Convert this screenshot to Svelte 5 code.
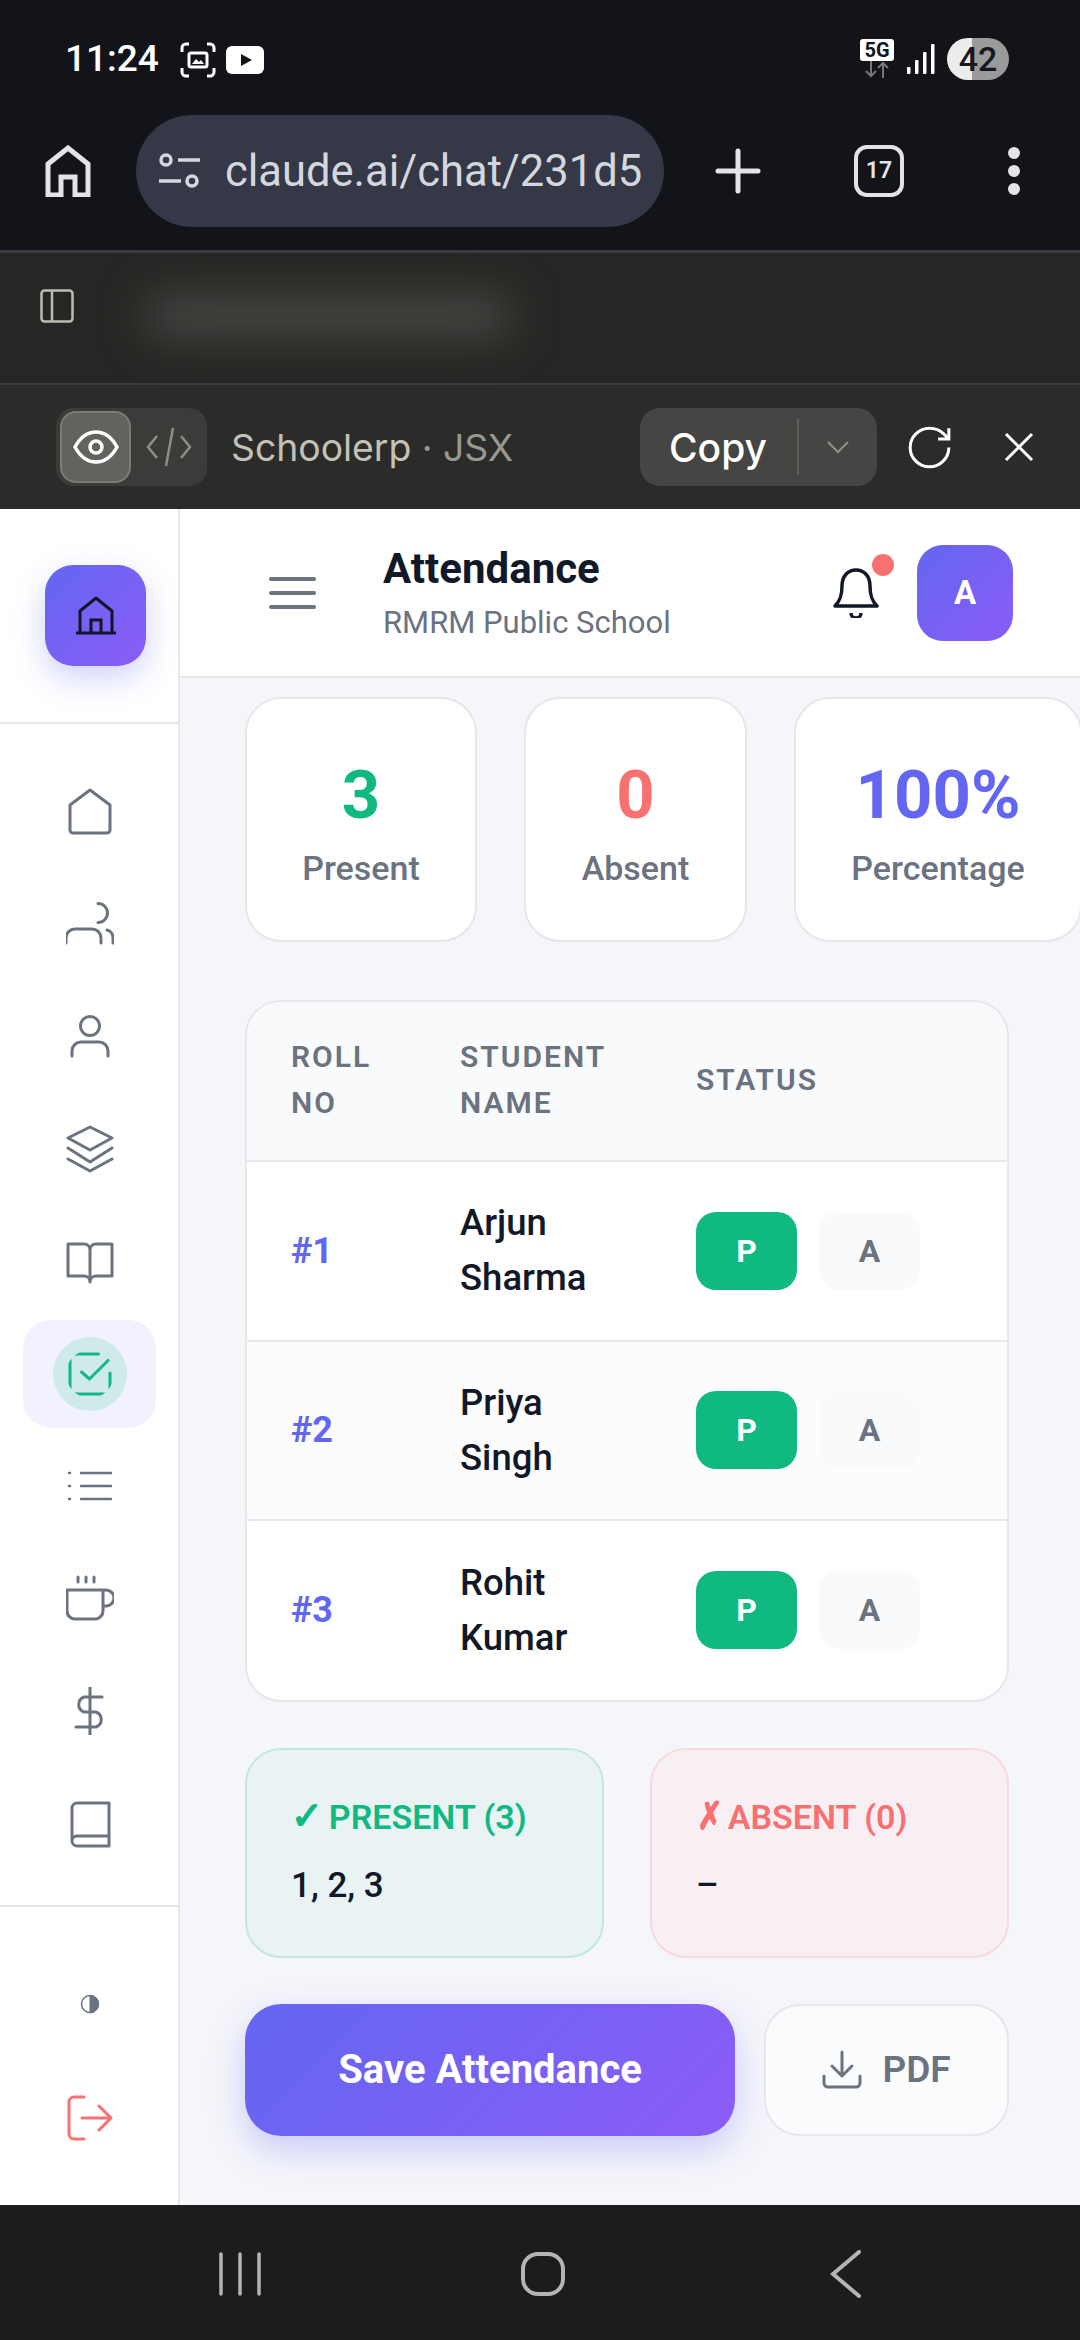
<script>
  const students = [
    { roll: 1, first: "Arjun", last: "Sharma" },
    { roll: 2, first: "Priya", last: "Singh" },
    { roll: 3, first: "Rohit", last: "Kumar" },
  ];

  const nav = [
    { d: "M24 2 L44 17 V42 a3 3 0 0 1-3 3 H7 a3 3 0 0 1-3-3 V17 Z" },
    { d: "M32 3.5 a9.5 9.5 0 0 1 0 19 M0 43 v-5 a9 9 0 0 1 9-9 H26 a9 9 0 0 1 9 9 v5 M41 30 a8 8 0 0 1 6 8 v5" },
    { d: "M14.5 13 a9.5 9.5 0 1 0 19 0 a9.5 9.5 0 1 0 -19 0 M6 43 v-5 a9 9 0 0 1 9-9 H33 a9 9 0 0 1 9 9 v5" },
    { d: "M24 2 L46 13 L24 25 L2 13 Z M2 23 L24 37 L46 23 M2 34 L24 46 L46 34" },
    { d: "M24 12 V43 M24 12 c0-3-2-6-6-6 H2 V38 H18 c3 0 6 2 6 6 c0-4 3-6 6-6 H46 V6 H30 c-4 0-6 3-6 6" },
    { d: "M32.5 4 H9 a5 5 0 0 0-5 5 V39 a5 5 0 0 0 5 5 H39 a5 5 0 0 0 5-5 V23 M15.5 22 L23.5 29 L45.5 7", active: true },
    { d: "M15 11 H45 M15 24 H45 M15 37 H45 M3 11 h1 M3 24 h1 M3 37 h1", thin: true },
    { d: "M12 2 v5 M20 2 v5 M28 2 v5 M1 15 H37 V36 a8 8 0 0 1-8 8 H9 a8 8 0 0 1-8-8 Z M37 15 h3 a8 8 0 0 1 0 16 h-3" },
    { d: "M24 0 V48 M36 10 H18 a8 8 0 0 0 0 15 H30 a8 8 0 0 1 0 15 H10" },
    { d: "M6 41 V8 a5 5 0 0 1 5-5 H43 V46 H11 a5 5 0 0 1-5-5 a5 5 0 0 1 5-5 H43" },
  ];
</script>

<div class="phone">
  <!-- android status bar -->
  <div class="status">
    <span class="time">11:24</span>
    <svg class="shot" viewBox="0 0 36 36" fill="none" stroke="#fff" stroke-width="3">
      <path d="M2 10 V6 a4 4 0 0 1 4-4 h3 M27 2 h3 a4 4 0 0 1 4 4 v4 M34 26 v4 a4 4 0 0 1-4 4 h-3 M9 34 H6 a4 4 0 0 1-4-4 v-4" />
      <rect x="9" y="11" width="18" height="14" rx="2" />
      <path d="M12 22 l4-5 l3 3 l2-2 l3 4 z" fill="#fff" stroke="none" />
    </svg>
    <svg class="yt" viewBox="0 0 38 28">
      <rect width="38" height="28" rx="6" fill="#fff" />
      <path d="M15 8 L26 14 L15 20 Z" fill="#12141a" />
    </svg>
    <div class="status-right">
      <div class="net">
        <span class="fiveg">5G</span>
        <svg viewBox="0 0 28 17" width="28" height="17" fill="none" stroke="#777" stroke-width="2">
          <path d="M8 0 V15 M3 10 L8 15 L13 10 M20 17 V2 M15 7 L20 2 L25 7" />
        </svg>
      </div>
      <svg class="signal" viewBox="0 0 28 30" fill="#fff">
        <rect x="0" y="23" width="3.5" height="7" rx="1" /><rect x="8" y="16" width="3.5" height="14" rx="1" />
        <rect x="16" y="8" width="3.5" height="22" rx="1" /><rect x="24" y="0" width="3.5" height="30" rx="1" />
      </svg>
      <div class="battery">42</div>
    </div>
  </div>

  <!-- chrome toolbar -->
  <div class="chrome">
    <svg class="c-home" viewBox="0 0 46 52" fill="none" stroke="#e3e4e8" stroke-width="5">
      <path d="M3 50 V19 L23 3 L43 19 V50 H30 V32 H16 V50 Z" />
    </svg>
    <div class="url">
      <svg viewBox="0 0 41 36" width="41" height="36" fill="none" stroke="#d5d7de" stroke-width="3.5">
        <circle cx="7" cy="7" r="5" /><path d="M19 7 H41 M0 28 H22" /><circle cx="33" cy="28" r="5" />
      </svg>
      <span>claude.ai/chat/231d5</span>
    </div>
    <svg class="plus" viewBox="0 0 46 46" stroke="#e3e4e8" stroke-width="5" stroke-linecap="round">
      <path d="M23 3 V43 M3 23 H43" />
    </svg>
    <div class="tabs">17</div>
    <div class="dots"><i></i><i></i><i></i></div>
  </div>

  <!-- claude chat header -->
  <div class="chat-head">
    <svg viewBox="0 0 34 34" width="34" height="34" fill="none" stroke="#bdbcb2" stroke-width="2.5">
      <rect x="1.5" y="1.5" width="31" height="31" rx="3" /><path d="M12 2 V32" />
    </svg>
    <div class="blurred"></div>
  </div>

  <!-- artifact toolbar -->
  <div class="art-bar">
    <div class="toggle">
      <div class="toggle-on">
        <svg viewBox="0 0 46 34" width="46" height="34" fill="none" stroke="#fff" stroke-width="3.5">
          <path d="M2 17 C8 6 15 2 23 2 C31 2 38 6 44 17 C38 28 31 32 23 32 C15 32 8 28 2 17 Z" /><circle cx="23" cy="17" r="6" />
        </svg>
      </div>
      <svg class="code" viewBox="0 0 46 40" fill="none" stroke="#8f8e86" stroke-width="2.5">
        <path d="M11 9 L2 20 L11 31 M35 9 L44 20 L35 31 M27 1 L20 39" />
      </svg>
    </div>
    <span class="art-title">Schoolerp <em>· JSX</em></span>
    <div class="copy">
      <span class="copy-text">Copy</span>
      <span class="copy-sep"></span>
      <svg viewBox="0 0 24 14" width="24" height="14" fill="none" stroke="#8f8e86" stroke-width="2.2"><path d="M2 2 L12 12 L22 2" /></svg>
    </div>
    <svg class="refresh" viewBox="2 2 20 20" fill="none" stroke="#fff" stroke-width="1.4">
      <path d="M21 12a9 9 0 1 1-9-9c2.52 0 4.93 1 6.74 2.74L21 8" /><path d="M21 3v5h-5" />
    </svg>
    <svg class="close" viewBox="0 0 30 30" stroke="#fff" stroke-width="3"><path d="M2 2 L28 28 M28 2 L2 28" /></svg>
  </div>

  <div class="app">
    <aside class="side">
      <div class="logo-wrap">
        <div class="logo">
          <svg viewBox="0 0 40 40" width="40" height="40" fill="none" stroke="#12162b" stroke-width="3">
            <path d="M4 36 V15 L20 2 L36 15 V36 M0 37 H40" stroke-linejoin="round" /><path d="M15 36 V24 H25 V36" />
          </svg>
        </div>
      </div>
      <nav class="nav">
        {#each nav as item}
          <div class="nav-item" class:active={item.active}>
            <svg viewBox="0 0 48 48" width="48" height="48" fill="none" stroke-width={item.thin ? 2.5 : 3} stroke-linecap="round" stroke-linejoin="round">
              <path d={item.d} />
            </svg>
          </div>
        {/each}
      </nav>
      <div class="side-bottom">
        <div class="nav-item">
          <svg viewBox="0 0 20 20" width="20" height="20"><circle cx="10" cy="10" r="8.5" fill="none" stroke="#6b7280" stroke-width="1.5" /><path d="M10 1.5 a8.5 8.5 0 0 1 0 17 z" fill="#6b7280" /></svg>
        </div>
        <div class="nav-item logout">
          <svg viewBox="0 0 48 48" width="48" height="48" fill="none" stroke-width="3" stroke-linecap="round" stroke-linejoin="round">
            <path d="M18 3 H8 a5 5 0 0 0-5 5 V40 a5 5 0 0 0 5 5 H18 M16 24 H45 M33 12 L45 24 L33 36" />
          </svg>
        </div>
      </div>
    </aside>

    <main class="main">
      <header class="top">
        <div class="burger"><i></i><i></i><i></i></div>
        <div class="titles">
          <h1>Attendance</h1>
          <p>RMRM Public School</p>
        </div>
        <div class="bell">
          <svg viewBox="0 0 46 50" width="46" height="50" fill="none" stroke="#111827" stroke-width="3.5" stroke-linejoin="round">
            <path d="M2 38 C7 33 9 28 9 18 C9 8 15 2 23 2 C31 2 37 8 37 18 C37 28 39 33 44 38 Z" /><path d="M18 45 a5 5 0 0 0 10 0" />
          </svg>
          <span class="bell-dot"></span>
        </div>
        <div class="avatar">A</div>
      </header>

      <div class="content">
        <div class="stats">
          <div class="stat s1"><b class="green">3</b><span>Present</span></div>
          <div class="stat s2"><b class="red">0</b><span>Absent</span></div>
          <div class="stat s3"><b class="indigo">100%</b><span>Percentage</span></div>
        </div>

        <div class="table-card">
          <table>
            <thead>
              <tr><th class="c1">ROLL NO</th><th class="c2">STUDENT NAME</th><th>STATUS</th></tr>
            </thead>
            <tbody>
              {#each students as s}
                <tr>
                  <td class="roll">#{s.roll}</td>
                  <td class="name">{s.first}<br />{s.last}</td>
                  <td><div class="btns"><span class="pa on">P</span><span class="pa">A</span></div></td>
                </tr>
              {/each}
            </tbody>
          </table>
        </div>

        <div class="summary">
          <div class="sum ok">
            <div class="sum-head"><span class="mark">✓</span>PRESENT (3)</div>
            <div class="sum-body">1, 2, 3</div>
          </div>
          <div class="sum bad">
            <div class="sum-head"><span class="mark">✗</span>ABSENT (0)</div>
            <div class="sum-body">–</div>
          </div>
        </div>

        <div class="actions">
          <button class="save">Save Attendance</button>
          <button class="pdf">
            <svg viewBox="0 0 40 40" width="40" height="40" fill="none" stroke="#6b7280" stroke-width="3" stroke-linecap="round" stroke-linejoin="round">
              <path d="M20 2 V26 M10 16 L20 26 L30 16 M2 26 V33 a4 4 0 0 0 4 4 H34 a4 4 0 0 0 4-4 V26" />
            </svg>
            PDF
          </button>
        </div>
      </div>
    </main>
  </div>

  <!-- android nav bar -->
  <div class="sys-nav">
    <svg viewBox="0 0 44 44" width="44" height="44" stroke="#b4b4b4" stroke-width="3.5" stroke-linecap="round"><path d="M3 2 V42 M22 2 V42 M41 2 V42" /></svg>
    <svg viewBox="0 0 44 44" width="44" height="44" fill="none" stroke="#b4b4b4" stroke-width="4"><rect x="2" y="2" width="40" height="40" rx="15" /></svg>
    <svg viewBox="0 0 32 48" width="32" height="48" fill="none" stroke="#b4b4b4" stroke-width="4" stroke-linecap="round"><path d="M29 2 L3 24 L29 46" /></svg>
  </div>
</div>

<style>
  :global(body) {
    margin: 0;
    background: #12141a;
  }

  .phone {
    width: 1080px;
    height: 2340px;
    display: flex;
    flex-direction: column;
    overflow: hidden;
    font-family: Roboto, "Liberation Sans", sans-serif;
  }

  /* status bar */
  .status {
    height: 115px;
    flex: none;
    box-sizing: border-box;
    padding: 38px 71px 0 65px;
    display: flex;
    align-items: flex-start;
    background: #12141a;
    color: #fff;
  }

  .time {
    font-size: 37px;
    line-height: 42px;
    font-weight: 500;
  }

  .shot {
    width: 36px;
    height: 36px;
    margin: 4px 0 0 21px;
  }

  .yt {
    width: 38px;
    height: 28px;
    margin: 8px 0 0 10px;
  }

  .status-right {
    margin-left: auto;
    display: flex;
    align-items: flex-start;
  }

  .net {
    display: flex;
    flex-direction: column;
    align-items: center;
    width: 34px;
  }

  .fiveg {
    width: 34px;
    height: 22px;
    margin-top: 1px;
    background: #fff;
    border-radius: 3px;
    color: #12141a;
    font-size: 20px;
    line-height: 22px;
    font-weight: 700;
    text-align: center;
  }

  .signal {
    width: 28px;
    height: 30px;
    margin: 6px 0 0 13px;
  }

  .battery {
    width: 62px;
    height: 42px;
    margin-left: 12px;
    border-radius: 21px;
    background: linear-gradient(90deg, #ececec 40%, #9a9a9a 40%);
    color: #16181d;
    font-size: 34px;
    line-height: 42px;
    font-weight: 500;
    text-align: center;
  }

  /* browser toolbar */
  .chrome {
    height: 138px;
    flex: none;
    box-sizing: border-box;
    padding-bottom: 23px;
    display: flex;
    align-items: center;
    background: #12141a;
    border-bottom: 3px solid #3a3c42;
  }

  .c-home {
    width: 46px;
    height: 52px;
    margin-left: 45px;
  }

  .url {
    width: 528px;
    height: 112px;
    margin-left: 45px;
    box-sizing: border-box;
    padding-left: 23px;
    display: flex;
    align-items: center;
    gap: 25px;
    border-radius: 56px;
    background: #343847;
    color: #d5d7de;
    font-size: 43.5px;
    white-space: nowrap;
  }

  .plus {
    width: 46px;
    height: 46px;
    margin-left: 51px;
  }

  .tabs {
    width: 50px;
    height: 52px;
    margin-left: 93px;
    box-sizing: border-box;
    border: 4px solid #e3e4e8;
    border-radius: 13px;
    color: #e3e4e8;
    font-size: 23px;
    font-weight: 600;
    line-height: 44px;
    text-align: center;
  }

  .dots {
    margin-left: 104px;
    display: flex;
    flex-direction: column;
    gap: 6px;
  }

  .dots i {
    width: 12px;
    height: 12px;
    border-radius: 50%;
    background: #e3e4e8;
  }

  /* claude header */
  .chat-head {
    height: 132px;
    flex: none;
    box-sizing: border-box;
    padding: 36px 0 0 40px;
    display: flex;
    align-items: flex-start;
    background: #262624;
    border-bottom: 2px solid #3c3c3a;
  }

  .blurred {
    width: 370px;
    height: 44px;
    margin: 5px 0 0 70px;
    background: #474745;
    border-radius: 22px;
    filter: blur(22px);
  }

  .art-bar {
    height: 124px;
    flex: none;
    box-sizing: border-box;
    padding: 0 46px 0 56px;
    display: flex;
    align-items: center;
    background: #2b2b29;
  }

  .toggle {
    width: 151px;
    height: 78px;
    box-sizing: border-box;
    padding: 2px 4px;
    display: flex;
    align-items: center;
    background: #3b3b39;
    border-radius: 18px;
  }

  .toggle-on {
    width: 71px;
    height: 72px;
    box-sizing: border-box;
    display: flex;
    align-items: center;
    justify-content: center;
    background: #62625f;
    border: 2px solid #7b7b78;
    border-radius: 16px;
  }

  .code {
    width: 46px;
    height: 40px;
    margin-left: 15px;
  }

  .art-title {
    margin-left: 24px;
    color: #c3c2b7;
    font-family: Inter, Roboto, sans-serif;
    font-size: 37.3px;
    white-space: nowrap;
  }

  .art-title em {
    font-style: normal;
    color: #9a9990;
  }

  .copy {
    width: 237px;
    height: 78px;
    margin-left: auto;
    box-sizing: border-box;
    padding-left: 29px;
    display: flex;
    align-items: center;
    background: #454543;
    border-radius: 20px;
  }

  .copy-text {
    width: 128px;
    color: #fff;
    font-family: Inter, Roboto, sans-serif;
    font-size: 39px;
    font-weight: 500;
  }

  .copy-sep {
    width: 2px;
    height: 56px;
    margin-right: 27px;
    background: #5e5e5b;
  }

  .refresh {
    width: 45px;
    height: 43px;
    margin-left: 30px;
  }

  .close {
    width: 30px;
    height: 30px;
    margin-left: 52px;
  }

  /* app */
  .app {
    flex: 1;
    min-height: 0;
    display: flex;
    background: #fff;
  }

  .side {
    width: 180px;
    flex: none;
    box-sizing: border-box;
    display: flex;
    flex-direction: column;
    border-right: 2px solid #e5e7eb;
  }

  .logo-wrap {
    height: 215px;
    flex: none;
    box-sizing: border-box;
    padding: 56px 0 0 45px;
    border-bottom: 2px solid #e5e7eb;
  }

  .logo {
    width: 101px;
    height: 101px;
    display: flex;
    align-items: center;
    justify-content: center;
    background: linear-gradient(135deg, #6366f1, #8b5cf6);
    border-radius: 28px;
    box-shadow: 0 12px 32px rgba(99, 102, 241, 0.3);
  }

  .nav {
    flex: 1;
    padding: 34px 0 0 23px;
    display: flex;
    flex-direction: column;
    gap: 4.4px;
    stroke: #6b7280;
  }

  .nav-item {
    width: 133px;
    height: 108px;
    flex: none;
    display: flex;
    align-items: center;
    justify-content: center;
    stroke: #6b7280;
    border-radius: 28px;
  }

  .nav-item.active {
    background: #f1f2fd;
    stroke: #10b981;
  }

  .nav-item.active svg {
    padding: 13px;
    background: rgba(16, 185, 129, 0.15);
    border-radius: 50%;
    flex: none;
  }

  .side-bottom {
    height: 300px;
    flex: none;
    box-sizing: border-box;
    padding: 43px 0 0 23px;
    display: flex;
    flex-direction: column;
    gap: 6px;
    border-top: 2px solid #e5e7eb;
  }

  .logout {
    stroke: #f87171;
  }

  .main {
    flex: 1;
    min-width: 0;
    display: flex;
    flex-direction: column;
    background: #f5f6fa;
    overflow: hidden;
  }

  .top {
    height: 169px;
    flex: none;
    box-sizing: border-box;
    padding: 0 67px 0 89px;
    display: flex;
    align-items: center;
    background: #fff;
    border-bottom: 2px solid #e5e7eb;
  }

  .burger {
    width: 47px;
    display: flex;
    flex-direction: column;
    gap: 10px;
  }

  .burger i {
    height: 4px;
    border-radius: 2px;
    background: #6b7280;
  }

  .titles {
    margin-left: 67px;
  }

  h1 {
    margin: 0;
    color: #111827;
    font-size: 42px;
    line-height: 52px;
    font-weight: 700;
  }

  .titles p {
    margin: 8px 0 0;
    color: #6b7280;
    font-size: 31px;
    line-height: 40px;
  }

  .bell {
    position: relative;
    margin-left: auto;
    width: 46px;
    height: 50px;
  }

  .bell-dot {
    position: absolute;
    top: -14px;
    left: 39px;
    width: 22px;
    height: 22px;
    border-radius: 50%;
    background: #f87171;
  }

  .avatar {
    width: 96px;
    height: 96px;
    margin-left: 38px;
    display: flex;
    align-items: center;
    justify-content: center;
    background: linear-gradient(135deg, #6366f1, #8b5cf6);
    border-radius: 26px;
    color: #fff;
    font-size: 33px;
    font-weight: 700;
  }

  .content {
    padding: 19px 0 0 65px;
    width: 764px;
  }

  .stats {
    display: flex;
    gap: 47px;
  }

  .stat {
    height: 245px;
    flex: none;
    box-sizing: border-box;
    padding-top: 60px;
    display: flex;
    flex-direction: column;
    align-items: center;
    background: #fff;
    border: 2px solid #e5e7eb;
    border-radius: 36px;
  }

  .s1 { width: 232px; }
  .s2 { width: 223px; }
  .s3 { width: 288px; }

  .stat b {
    font-size: 67px;
    line-height: 72px;
    font-weight: 700;
  }

  .stat span {
    margin-top: 17px;
    color: #6b7280;
    font-size: 34px;
    line-height: 40px;
    font-weight: 500;
  }

  .green { color: #10b981; }
  .red { color: #f87171; }
  .indigo { color: #6366f1; }

  .table-card {
    margin-top: 58px;
    background: #fff;
    border: 2px solid #e5e7eb;
    border-radius: 36px;
    overflow: hidden;
  }

  table {
    width: 100%;
    border-collapse: collapse;
    table-layout: fixed;
  }

  th {
    height: 155px;
    padding: 0 0 3px 44px;
    background: #f9fafb;
    color: #6b7280;
    font-size: 30px;
    line-height: 46px;
    font-weight: 600;
    letter-spacing: 2px;
    text-align: left;
  }

  .c1 { width: 125px; }
  .c2 { width: 192px; }

  tbody tr {
    height: 179.5px;
    border-top: 2px solid #e5e7eb;
  }

  tbody tr:nth-child(even) {
    background: #fcfcfd;
  }

  td {
    padding: 0 0 0 44px;
  }

  .roll {
    color: #6366f1;
    font-size: 36px;
    font-weight: 700;
  }

  .name {
    padding-bottom: 1px;
    color: #111827;
    font-size: 36.5px;
    line-height: 55px;
    font-weight: 500;
  }

  .btns {
    display: flex;
    gap: 22px;
  }

  .pa {
    width: 101px;
    height: 78px;
    display: flex;
    align-items: center;
    justify-content: center;
    background: #f9fafb;
    border-radius: 20px;
    color: #6b7280;
    font-size: 32px;
    font-weight: 700;
  }

  .pa.on {
    background: #10b981;
    color: #fff;
  }

  .summary {
    margin-top: 46px;
    display: flex;
    gap: 46px;
  }

  .sum {
    flex: 1;
    height: 210px;
    box-sizing: border-box;
    padding: 44px 0 0 44px;
    border: 2px solid;
    border-radius: 36px;
  }

  .sum.ok {
    background: #e9f3f3;
    border-color: #c2e8de;
    color: #10b981;
  }

  .sum.bad {
    background: #f7eff4;
    border-color: #f6dadd;
    color: #f87171;
  }

  .sum-head {
    font-size: 34px;
    line-height: 44px;
    font-weight: 600;
  }

  .mark {
    display: inline-block;
    margin-right: 6px;
    font-family: "DejaVu Sans", sans-serif;
    font-size: 38px;
    line-height: 44px;
    -webkit-text-stroke: 1.6px currentColor;
  }

  .bad .mark {
    margin: 0 2px 0 -2px;
    transform: scaleX(0.8);
  }

  .sum-body {
    margin-top: 25px;
    color: #111827;
    font-size: 35px;
    line-height: 44px;
    font-weight: 500;
  }

  .actions {
    margin-top: 46px;
    display: flex;
    gap: 29px;
  }

  .actions button {
    height: 132px;
    font-family: inherit;
    border-radius: 36px;
  }

  .save {
    width: 490px;
    background: linear-gradient(135deg, #6366f1, #8b5cf6);
    border: none;
    color: #fff;
    font-size: 40px;
    font-weight: 700;
    box-shadow: 0 14px 36px rgba(99, 102, 241, 0.3);
  }

  .pdf {
    width: 245px;
    display: flex;
    align-items: center;
    justify-content: center;
    gap: 20px;
    background: #fafbfd;
    border: 2px solid #e5e7eb;
    color: #6b7280;
    font-size: 37px;
    font-weight: 600;
  }

  /* android nav */
  .sys-nav {
    height: 135px;
    flex: none;
    box-sizing: border-box;
    padding: 3px 0 0 218px;
    display: flex;
    align-items: center;
    background: #1c1c1c;
  }

  .sys-nav svg:nth-child(2) {
    margin: 0 265px 0 259px;
  }
</style>
